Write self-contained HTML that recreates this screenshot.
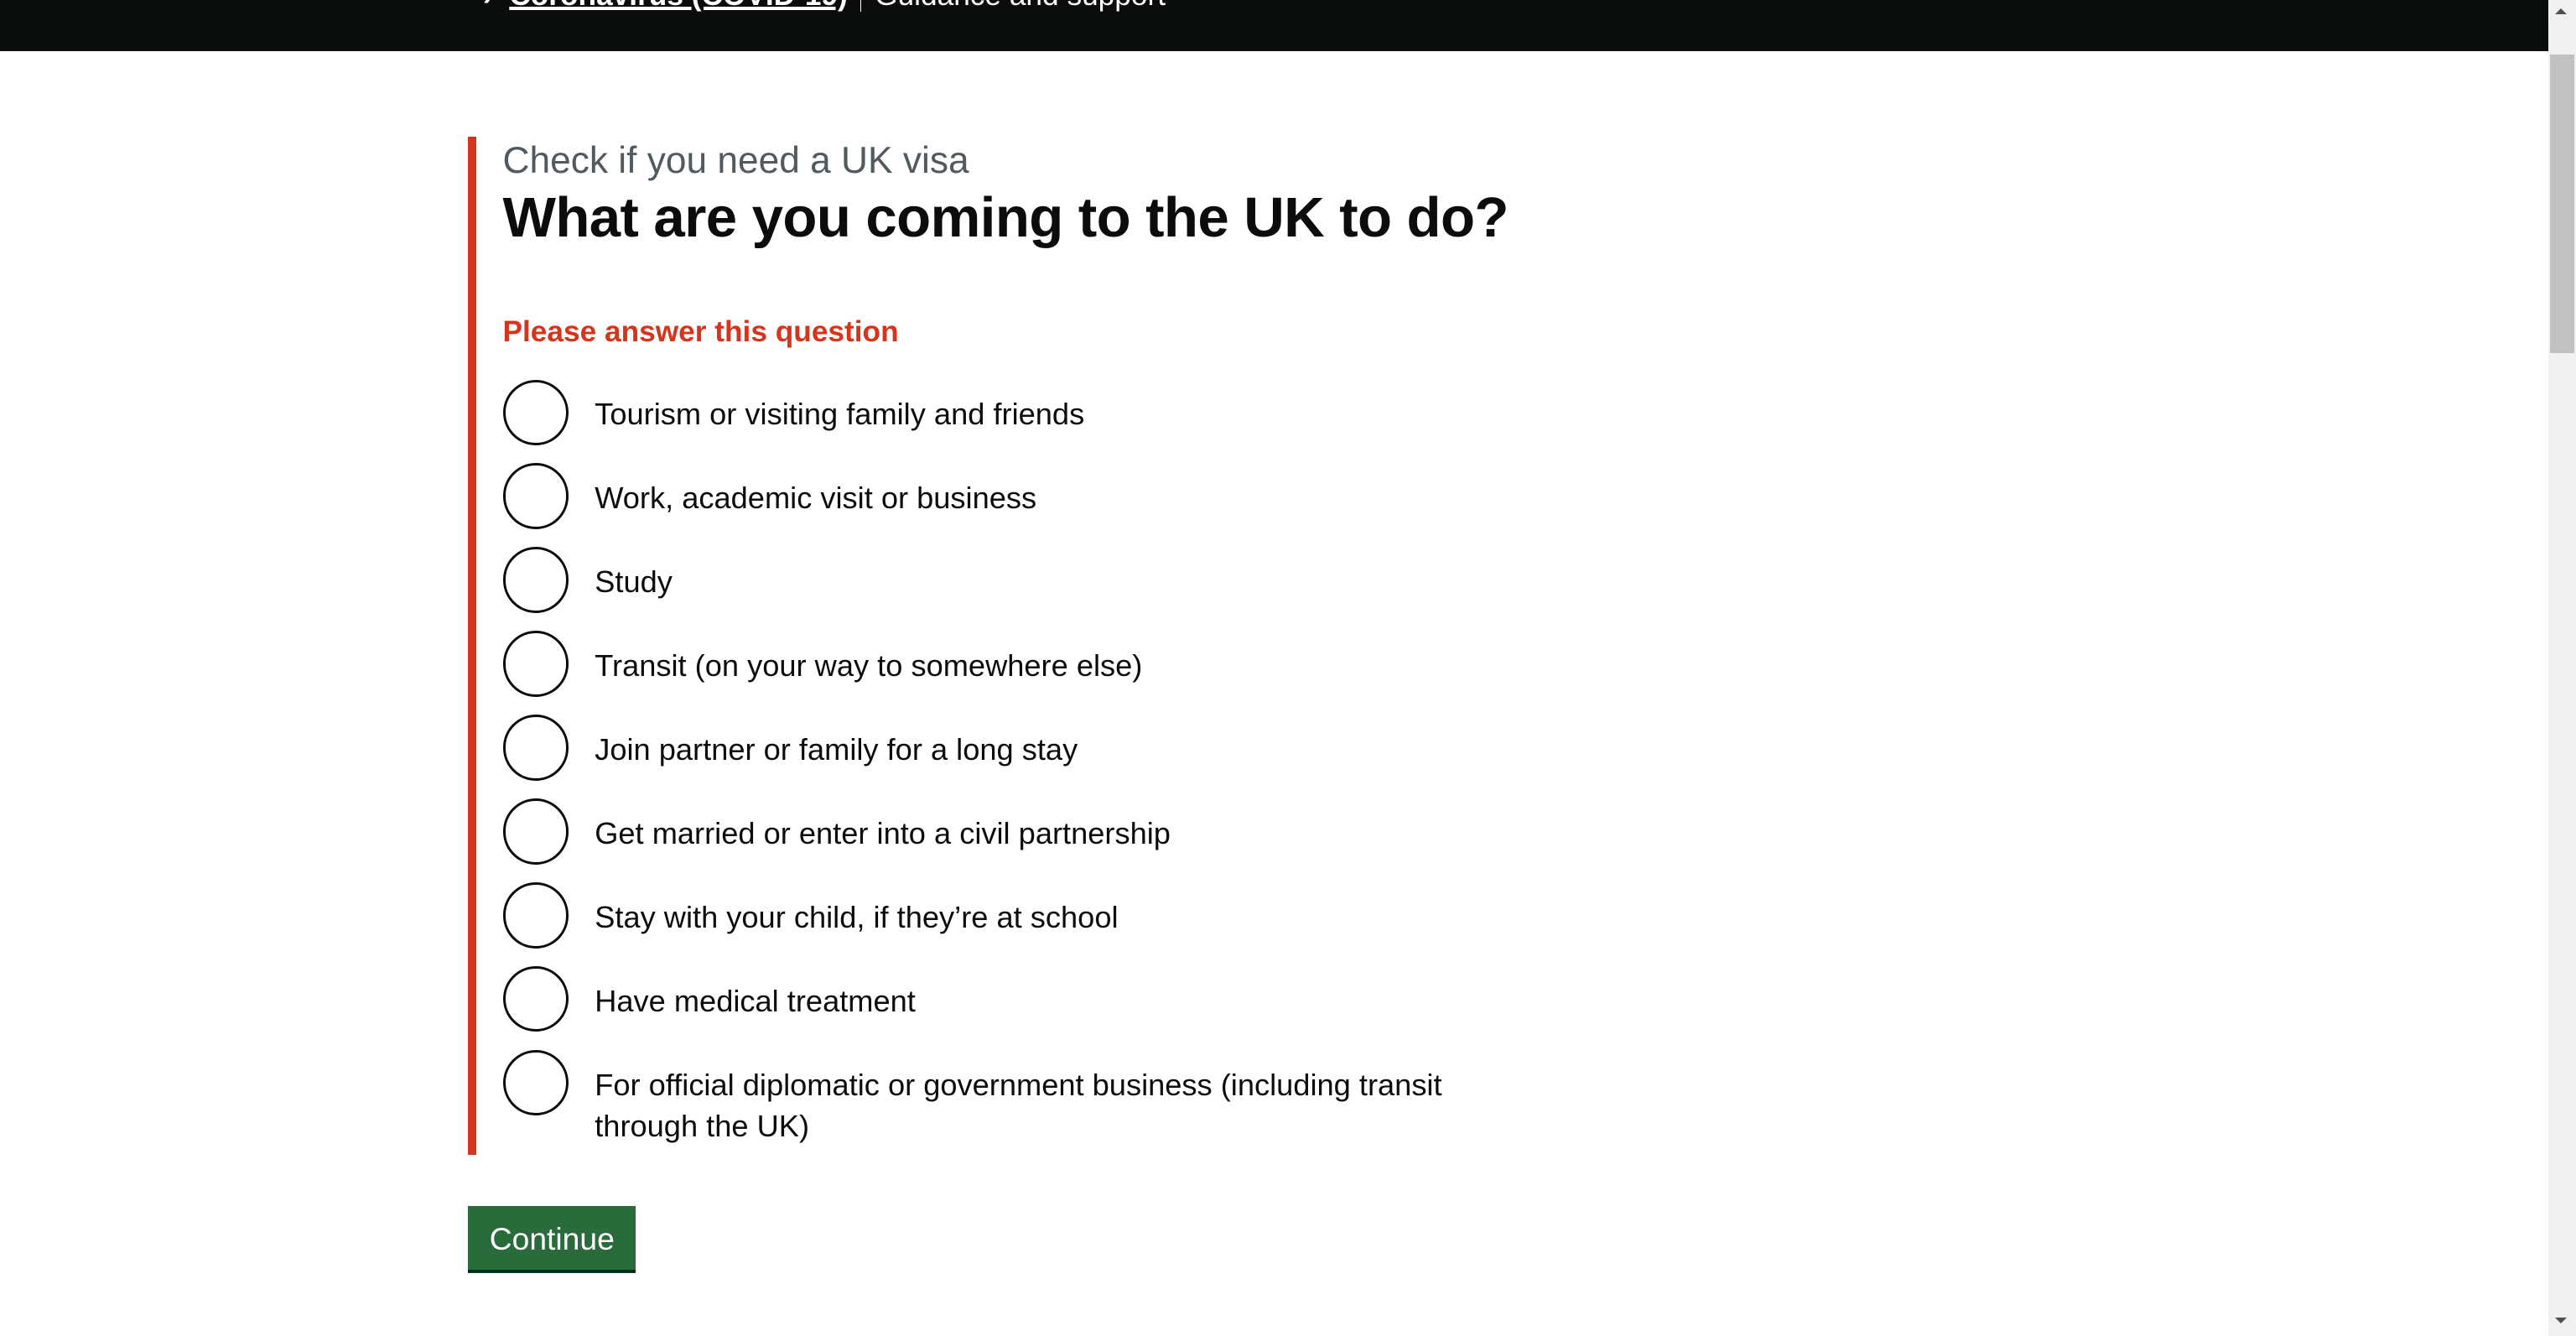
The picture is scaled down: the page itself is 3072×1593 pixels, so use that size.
<!DOCTYPE html>
<html><head><meta charset="utf-8"><style>
html{zoom:1.95918}
body{margin:0;width:1568px;height:812.6px;overflow:hidden;position:relative;background:#fff;font-family:"Liberation Sans",Arial,sans-serif;color:#0b0c0c}
.top{position:absolute;left:0;top:0;width:1551px;height:31px;background:#0b0c0c;overflow:hidden}
.top .t{position:absolute;left:294px;top:-13px;color:#fff;font-size:18px;font-weight:bold;white-space:nowrap}
.top .t u{text-decoration-thickness:2px}
.top .g{font-weight:normal;margin-left:8px;border-left:1px solid #fff;padding-left:8px}
.sb{position:absolute;left:1551px;top:0;width:17px;height:813px;background:#f0f0f0}
.thumb{position:absolute;left:1552px;top:33px;width:15px;height:182px;background:#c1c1c1}
.au{position:absolute;left:1555px;top:5px;width:0;height:0;border-left:4px solid transparent;border-right:4px solid transparent;border-bottom:4px solid #505050}
.ad{position:absolute;left:1555px;top:802px;width:0;height:0;border-left:4px solid transparent;border-right:4px solid transparent;border-top:4px solid #505050}
.bar{position:absolute;left:285px;top:83px;width:5px;height:620px;background:#d4351c}
.cap{position:absolute;left:306px;top:85px;font-size:22.6px;color:#505a5f}
h1{position:absolute;left:306px;top:113px;margin:0;font-size:34.3px;font-weight:bold;letter-spacing:-0.3px}
.err{position:absolute;left:306px;top:192px;font-size:18px;font-weight:bold;color:#d4351c}
.r{position:absolute;left:306px;width:37px;height:37px;border:2px solid #0b0c0c;border-radius:50%}
.l{position:absolute;left:362px;font-size:18.5px;line-height:25px}
.btn{position:absolute;left:285px;top:734px;width:102px;height:39px;background:#2a6b3c;box-shadow:0 2px 0 #002d18;color:#fff;font-size:19px;text-align:center;line-height:40px}
</style></head><body>
<div class="top"><div class="t">&#8250;&nbsp;&nbsp;<u>Coronavirus (COVID-19)</u><span class="g">Guidance and support</span></div></div>
<div class="sb"></div><div class="thumb"></div><div class="au"></div><div class="ad"></div>
<div class="bar"></div>
<div class="cap">Check if you need a UK visa</div>
<h1>What are you coming to the UK to do?</h1>
<div class="err">Please answer this question</div>
<div class="r" style="top:231px"></div><div class="l" style="top:240px">Tourism or visiting family and friends</div>
<div class="r" style="top:282px"></div><div class="l" style="top:291px">Work, academic visit or business</div>
<div class="r" style="top:333px"></div><div class="l" style="top:342px">Study</div>
<div class="r" style="top:384px"></div><div class="l" style="top:393px">Transit (on your way to somewhere else)</div>
<div class="r" style="top:435px"></div><div class="l" style="top:444px">Join partner or family for a long stay</div>
<div class="r" style="top:486px"></div><div class="l" style="top:495px">Get married or enter into a civil partnership</div>
<div class="r" style="top:537px"></div><div class="l" style="top:546px">Stay with your child, if they’re at school</div>
<div class="r" style="top:588px"></div><div class="l" style="top:597px">Have medical treatment</div>
<div class="r" style="top:639px"></div><div class="l" style="top:648px">For official diplomatic or government business (including transit<br>through the UK)</div>
<div class="btn">Continue</div>
</body></html>
